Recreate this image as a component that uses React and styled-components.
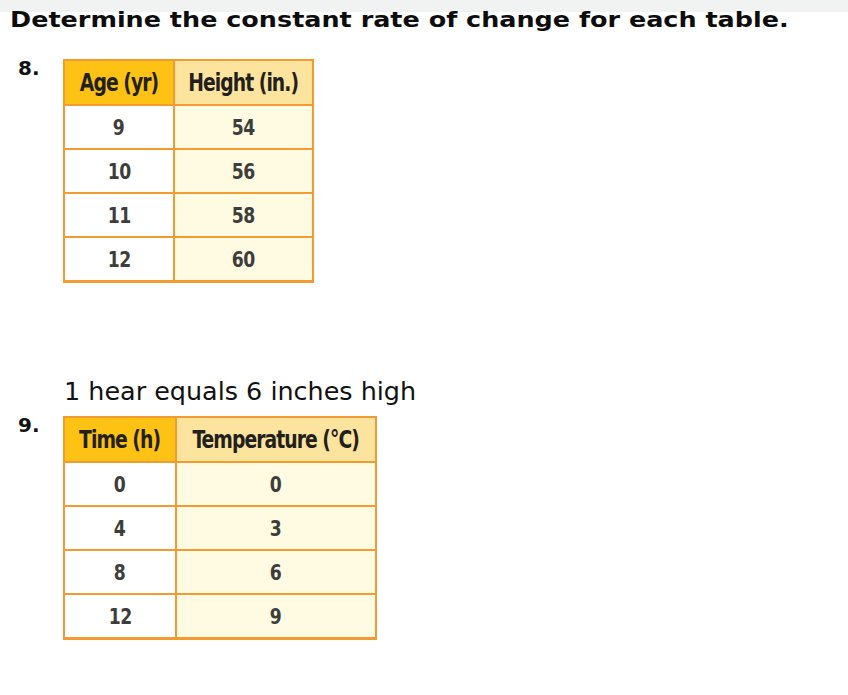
import React from 'react';
import styled, { createGlobalStyle } from 'styled-components';

const GlobalStyle = createGlobalStyle`
  html, body {
    margin: 0;
    padding: 0;
    background: #fff;
  }
  body {
    font-family: 'DejaVu Sans', 'Liberation Sans', sans-serif;
    color: #000;
  }
`;

const Page = styled.div`
  width: 848px;
  min-height: 695px;
  background: linear-gradient(#f1f2f2 0 12px, #fff 12px);
`;

// the source uses a wider face than DejaVu, so stretch the glyphs a little
const Heading = styled.h1`
  margin: 0;
  padding: 7px 0 0 10px;
  font-size: 22px;
  line-height: 26px;
  font-weight: 700;
  color: #0d0d0d;
  white-space: nowrap;

  span {
    display: inline-block;
    transform: scaleX(1.157);
    transform-origin: left center;
  }
`;

const Problem = styled.section`
  display: grid;
  grid-template-columns: 63px auto;
  justify-content: start;
  margin-top: ${props => props.gap}px;
`;

const Caption = styled.p`
  grid-column: 2;
  margin: 0 0 10px 1px;
  font-size: 24px;
  line-height: 28px;
  color: #111;
  white-space: nowrap;
  transform: scaleX(1.06);
  transform-origin: left center;
`;

const Label = styled.div`
  grid-column: 1;
  padding-left: 18px;
  font-size: 20px;
  line-height: 18px;
  font-weight: 700;
  color: #111;
`;

const Table = styled.table`
  width: ${props => props.w}px;
  border-collapse: collapse;
  table-layout: fixed;
  font-family: 'DejaVu Sans Condensed', 'Liberation Sans Narrow', 'DejaVu Sans', sans-serif;
  border: 2px solid #f39b30;
  border-bottom-width: 3px;
`;

// textbook tables use a tall, narrow face: squeeze the condensed glyphs
const Squeeze = styled.span`
  display: inline-block;
  transform: scaleX(0.87);
`;

const Head = styled.th`
  width: ${props => props.w}px;
  height: 43px;
  padding: 0;
  border: 2px solid #f39b30;
  background: ${props => (props.first ? '#fdc213' : '#fde49e')};
  font-size: 24px;
  font-weight: 700;
  letter-spacing: -1.1px;
  color: #231f1c;
  text-align: center;
  white-space: nowrap;
`;

const Cell = styled.td`
  height: 42px;
  padding: 0;
  border: 2px solid #f39b30;
  background: ${props => (props.first ? '#ffffff' : '#fffbe2')};
  font-size: 22px;
  font-weight: 700;
  letter-spacing: -0.6px;
  color: #3d3d3b;
  text-align: center;
`;

const problems = [
  {
    number: '8.',
    gap: 26,
    widths: [108, 137],
    headers: ['Age (yr)', 'Height (in.)'],
    rows: [
      ['9', '54'],
      ['10', '56'],
      ['11', '58'],
      ['12', '60'],
    ],
  },
  {
    number: '9.',
    gap: 95,
    caption: '1 hear equals 6 inches high',
    widths: [110, 198],
    headers: ['Time (h)', 'Temperature (°C)'],
    rows: [
      ['0', '0'],
      ['4', '3'],
      ['8', '6'],
      ['12', '9'],
    ],
  },
];

const RateTable = ({ widths, headers, rows }) => (
  <Table w={widths[0] + widths[1]}>
    <thead>
      <tr>
        {headers.map((h, i) => (
          <Head key={h} first={i === 0} w={widths[i]}>
            <Squeeze>{h}</Squeeze>
          </Head>
        ))}
      </tr>
    </thead>
    <tbody>
      {rows.map(row => (
        <tr key={row[0]}>
          {row.map((v, i) => (
            <Cell key={i} first={i === 0}>
              <Squeeze>{v}</Squeeze>
            </Cell>
          ))}
        </tr>
      ))}
    </tbody>
  </Table>
);

const App = () => (
  <Page>
    <GlobalStyle />
    <Heading>
      <span>Determine the constant rate of change for each table.</span>
    </Heading>
    {problems.map(p => (
      <Problem key={p.number} gap={p.gap}>
        {p.caption && <Caption>{p.caption}</Caption>}
        <Label>{p.number}</Label>
        <RateTable widths={p.widths} headers={p.headers} rows={p.rows} />
      </Problem>
    ))}
  </Page>
);

export default App;
